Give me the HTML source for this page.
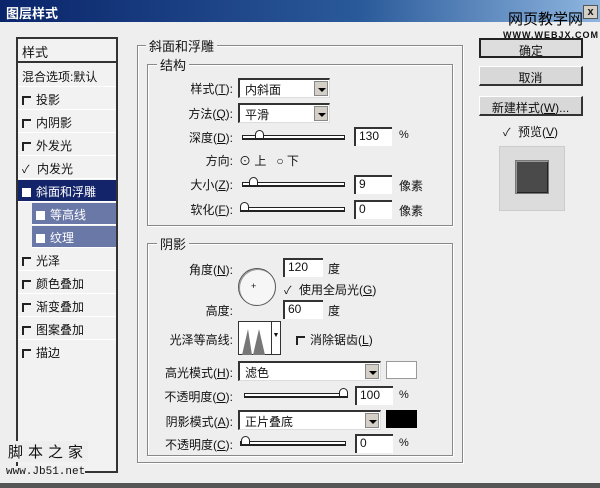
<!DOCTYPE html>
<html><head><meta charset="utf-8"><style>
*{margin:0;padding:0;box-sizing:border-box}
body{width:600px;height:488px;background:#eeeeee;font-family:"Liberation Sans","Noto Sans CJK SC",sans-serif;font-size:12px;color:#111;position:relative;overflow:hidden}
.a{position:absolute;white-space:nowrap}
.title{left:0;top:0;width:600px;height:22px;background:linear-gradient(90deg,#0a246a,#2a5a9a 60%,#8fb6e0);color:#fff;font-weight:bold;font-size:13px;padding:3px 6px}
.left{left:16px;top:37px;width:102px;height:436px;border:2px solid #333;background:#f2f2f2}
.it{position:absolute;left:0;width:98px;height:22px;border-bottom:1px solid #fff;padding:3px 4px}
.cb{display:inline-block;width:9px;height:9px;border-left:2px solid #222;border-top:2px solid #222;margin-right:5px;vertical-align:-1px}
.frame{position:absolute;border:1px solid #888;box-shadow:1px 1px 0 #fff inset, 1px 1px 0 #fff}
.leg{position:absolute;background:#eeeeee;padding:0 3px;font-size:13px}
.lab{position:absolute;text-align:right;width:100px;font-size:12px}
.dd{position:absolute;height:20px;background:#fff;border-top:2px solid #333;border-left:2px solid #333;border-right:1px solid #ddd;border-bottom:1px solid #ddd;padding:1px 5px}
.dd b{position:absolute;right:1px;top:1px;width:14px;height:15px;background:#d4d0c8;border:1px solid #888}
.dd b:after{content:"";position:absolute;left:3px;top:6px;border:4px solid transparent;border-top:4px solid #000;border-bottom:0}
.sl{position:absolute;height:5px;border:1px solid #222;border-bottom:2px solid #222;background:#fff}
.th{position:absolute;top:-6px;width:9px;height:9px;background:#fff;border:1px solid #222;border-radius:50% 50% 0 0}
.in{position:absolute;height:19px;background:#fff;border-top:2px solid #333;border-left:2px solid #333;padding:0 3px;font-size:12px}
.btn{position:absolute;left:479px;width:104px;height:20px;background:#d8d8d8;border:1px solid #fff;border-right:2px solid #333;border-bottom:2px solid #333;text-align:center;font-size:12px;padding-top:2px}
.ck{display:inline-block;width:10px;font-size:11px;margin-right:5px}
</style></head><body>
<div class="a title">图层样式</div>
<div class="a" style="left:508px;top:8px;font-size:15px;color:#000">网页教学网</div>
<div class="a" style="left:503px;top:30px;font-size:9px;font-weight:bold;letter-spacing:1px">WWW.WEBJX.COM</div>
<div class="a" style="left:583px;top:5px;width:15px;height:14px;background:#d4d0c8;border:1px solid #555;font-size:11px;font-weight:bold;text-align:center;line-height:12px">x</div>

<div class="a left">
<div class="it" style="top:0;height:24px;border-bottom:2px solid #333;font-size:13px">样式</div>
<div class="it" style="top:26px">混合选项:默认</div>
<div class="it" style="top:49px"><span class="cb"></span>投影</div>
<div class="it" style="top:72px"><span class="cb"></span>内阴影</div>
<div class="it" style="top:95px"><span class="cb"></span>外发光</div>
<div class="it" style="top:118px"><span class="ck">✓</span>内发光</div>
<div class="it" style="top:141px;background:#14246a;color:#fff"><span class="cb" style="background:#fff;border:none"></span>斜面和浮雕</div>
<div class="it" style="top:164px;left:14px;width:84px;background:#6a78a8;color:#fff"><span class="cb" style="background:#fff;border:none"></span>等高线</div>
<div class="it" style="top:187px;left:14px;width:84px;background:#6a78a8;color:#fff"><span class="cb" style="background:#fff;border:none"></span>纹理</div>
<div class="it" style="top:210px"><span class="cb"></span>光泽</div>
<div class="it" style="top:233px"><span class="cb"></span>颜色叠加</div>
<div class="it" style="top:256px"><span class="cb"></span>渐变叠加</div>
<div class="it" style="top:279px"><span class="cb"></span>图案叠加</div>
<div class="it" style="top:302px;border:none"><span class="cb"></span>描边</div>
</div>
<div class="a" style="left:8px;top:441px;font-size:15px;letter-spacing:5px;background:#eee">脚本之家</div>
<div class="a" style="left:6px;top:466px;font-size:11px;font-family:'Liberation Mono',monospace;background:#eee">www.Jb51.net</div>
<div class="a" style="left:0;top:483px;width:600px;height:5px;background:#555"></div>

<div class="frame" style="left:137px;top:45px;width:326px;height:418px"></div>
<div class="leg" style="left:146px;top:36px">斜面和浮雕</div>
<div class="frame" style="left:147px;top:64px;width:306px;height:162px"></div>
<div class="leg" style="left:157px;top:55px">结构</div>
<div class="lab" style="left:133px;top:80px">样式(<u>T</u>):</div>
<div class="dd" style="left:238px;top:78px;width:92px">内斜面<b></b></div>
<div class="lab" style="left:133px;top:105px">方法(<u>Q</u>):</div>
<div class="dd" style="left:238px;top:103px;width:92px">平滑<b></b></div>
<div class="lab" style="left:133px;top:129px">深度(<u>D</u>):</div>
<div class="sl" style="left:242px;top:135px;width:103px"><div class="th" style="left:12px"></div></div>
<div class="in" style="left:354px;top:127px;width:38px">130</div>
<div class="a" style="left:399px;top:129px;font-size:11px">%</div>
<div class="lab" style="left:133px;top:152px">方向:</div>
<div class="a" style="left:239px;top:152px">⊙ 上 &nbsp;&nbsp;○ 下</div>
<div class="lab" style="left:133px;top:176px">大小(<u>Z</u>):</div>
<div class="sl" style="left:242px;top:182px;width:103px"><div class="th" style="left:6px"></div></div>
<div class="in" style="left:354px;top:175px;width:38px">9</div>
<div class="a" style="left:399px;top:177px">像素</div>
<div class="lab" style="left:133px;top:201px">软化(<u>F</u>):</div>
<div class="sl" style="left:240px;top:207px;width:105px"><div class="th" style="left:-1px"></div></div>
<div class="in" style="left:354px;top:200px;width:38px">0</div>
<div class="a" style="left:399px;top:202px">像素</div>

<div class="frame" style="left:147px;top:243px;width:306px;height:213px"></div>
<div class="leg" style="left:157px;top:234px">阴影</div>
<div class="lab" style="left:133px;top:261px">角度(<u>N</u>):</div>
<div class="a" style="left:238px;top:268px;width:38px;height:38px;border:1px solid #555;border-radius:50%;background:#f6f6f6;box-shadow:1px 1px 0 #999 inset"></div>
<div class="a" style="left:251px;top:281px;font-size:9px">+</div>
<div class="in" style="left:283px;top:258px;width:40px">120</div>
<div class="a" style="left:328px;top:260px">度</div>
<div class="a" style="left:284px;top:281px"><span class="ck">✓</span>使用全局光(<u>G</u>)</div>
<div class="lab" style="left:133px;top:302px">高度:</div>
<div class="in" style="left:283px;top:300px;width:40px">60</div>
<div class="a" style="left:328px;top:302px">度</div>
<div class="lab" style="left:133px;top:331px">光泽等高线:</div>
<div class="a" style="left:238px;top:321px;width:43px;height:34px;border:1px solid #333;background:#fff">
<svg width="30" height="32" style="position:absolute;left:1px;top:1px"><path d="M2 32 L8 6 L12 32 Z M13 32 L19 6 L25 32Z" fill="#777"/></svg>
<div style="position:absolute;right:0;top:0;width:9px;height:32px;border-left:1px solid #333;font-size:7px;text-align:center;padding-top:10px">▼</div></div>
<div class="a" style="left:296px;top:331px"><span class="cb"></span>消除锯齿(<u>L</u>)</div>
<div class="lab" style="left:133px;top:364px">高光模式(<u>H</u>):</div>
<div class="dd" style="left:238px;top:361px;width:143px">滤色<b></b></div>
<div class="a" style="left:386px;top:361px;width:31px;height:18px;background:#fff;border:1px solid #999"></div>
<div class="lab" style="left:133px;top:388px">不透明度(<u>O</u>):</div>
<div class="sl" style="left:244px;top:393px;width:104px"><div class="th" style="left:94px"></div></div>
<div class="in" style="left:355px;top:386px;width:38px">100</div>
<div class="a" style="left:399px;top:389px;font-size:11px">%</div>
<div class="lab" style="left:133px;top:413px">阴影模式(<u>A</u>):</div>
<div class="dd" style="left:238px;top:410px;width:143px">正片叠底<b></b></div>
<div class="a" style="left:386px;top:410px;width:31px;height:18px;background:#000"></div>
<div class="lab" style="left:133px;top:436px">不透明度(<u>C</u>):</div>
<div class="sl" style="left:240px;top:441px;width:106px"><div class="th" style="left:0"></div></div>
<div class="in" style="left:355px;top:434px;width:38px">0</div>
<div class="a" style="left:399px;top:437px;font-size:11px">%</div>

<div class="btn" style="top:38px;border:2px solid #222;background:#ddd">确定</div>
<div class="btn" style="top:66px">取消</div>
<div class="btn" style="top:96px">新建样式(<u>W</u>)...</div>
<div class="a" style="left:503px;top:123px"><span class="ck">✓</span>预览(<u>V</u>)</div>
<div class="a" style="left:499px;top:146px;width:66px;height:65px;background:#dcdcdc;border:1px solid #ccc"></div>
<div class="a" style="left:515px;top:160px;width:34px;height:34px;background:#4a4a4a;border:1px solid #777;box-shadow:1px 1px 0 #999 inset,-1px -1px 0 #222 inset"></div>
</body></html>
